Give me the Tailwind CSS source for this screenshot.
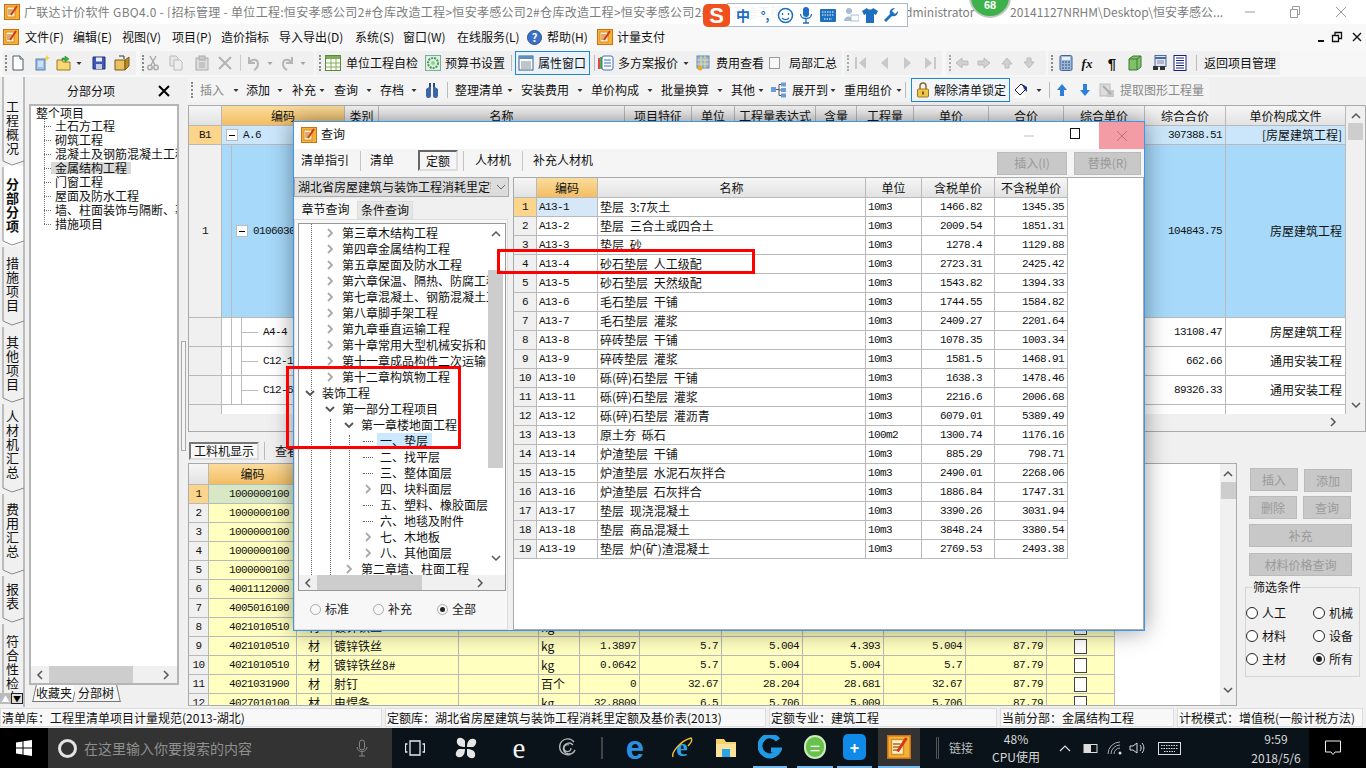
<!DOCTYPE html>
<html lang="zh-CN">
<head>
  <meta charset="UTF-8">
  <title>广联达计价软件 GBQ4.0</title>
  <script src="https://cdn.jsdelivr.net/npm/@tailwindcss/browser@4"></script>
</head>
<body class="w-[1366px] h-[768px] overflow-hidden relative bg-[#f0f0f0] text-[12px] leading-none text-[#111] font-['Noto_Sans_CJK_SC',sans-serif]">

  <!-- Icon sprite -->
  <svg class="hidden">
    <symbol id="app" viewBox="0 0 16 16"><rect x="0.5" y="0.5" width="15" height="15" fill="#f5b335" stroke="#c9701a"/><rect x="3" y="3" width="8" height="10" fill="#fff3c9" stroke="#d98a2a"/><path d="M4 6h5M4 8h5M4 10h4" stroke="#b8641c"/><path d="M13 2L7 11" stroke="#d3361c" stroke-width="2"/></symbol>
    <symbol id="doc" viewBox="0 0 16 16"><path d="M3 1h7l3 3v11H3z" fill="#fff" stroke="#4a5a6a"/><path d="M10 1v3h3" fill="#dfe8f0" stroke="#4a5a6a"/></symbol>
    <symbol id="multi" viewBox="0 0 16 16"><rect x="2" y="4" width="9" height="11" fill="#9cc0e6" stroke="#5b7fa8"/><path d="M4 7h5M4 9h5M4 11h5" stroke="#fff"/><path d="M13 0l1 2 2 1-2 1-1 2-1-2-2-1 2-1z" fill="#f7d23e"/></symbol>
    <symbol id="open" viewBox="0 0 16 16"><path d="M1 5h5l1 2h7v8H1z" fill="#f7d875" stroke="#9a7a1e"/><path d="M9 1l4 3-4 3V5H6V3h3z" fill="#3fae3a" stroke="#1f7a1c" stroke-width=".5"/></symbol>
    <symbol id="save" viewBox="0 0 16 16"><path d="M2 2h12v12H2z" fill="#3f57b5" stroke="#20307a"/><rect x="5" y="2.500" width="6" height="4" fill="#e8eefc"/><rect x="5" y="9" width="6" height="5" fill="#c5cfe8"/></symbol>
    <symbol id="folder" viewBox="0 0 16 16"><path d="M1 5h10v10H1z" fill="#e9c15f" stroke="#7b5a16"/><path d="M11 5l4-3v9l-4 4z" fill="#b98d2c" stroke="#7b5a16"/><path d="M5 1h5v3" fill="none" stroke="#333"/></symbol>
    <symbol id="cut" viewBox="0 0 16 16"><path d="M5 1l5 9M11 1L6 10" stroke="#aaa" stroke-width="1.500" fill="none"/><circle cx="5" cy="12.500" r="2.200" fill="none" stroke="#aaa" stroke-width="1.500"/><circle cx="11" cy="12.500" r="2.200" fill="none" stroke="#aaa" stroke-width="1.500"/></symbol>
    <symbol id="copy" viewBox="0 0 16 16"><path d="M2 1h6l2 2v8H2z" fill="#e6e6e6" stroke="#bbb"/><path d="M6 5h6l2 2v8H6z" fill="#eee" stroke="#bbb"/></symbol>
    <symbol id="paste" viewBox="0 0 16 16"><rect x="2" y="3" width="12" height="12" fill="#ddd" stroke="#aaa"/><rect x="5" y="1" width="6" height="4" fill="#ccc" stroke="#aaa"/><path d="M5 8h6M5 10h6M5 12h6" stroke="#aaa"/></symbol>
    <symbol id="x" viewBox="0 0 16 16"><path d="M2 2l12 12M14 2L2 14" stroke="#b5b5b5" stroke-width="2.200"/></symbol>
    <symbol id="undo" viewBox="0 0 16 16"><path d="M3 2v6h6" fill="none" stroke="#b5b5b5" stroke-width="2"/><path d="M3 8c3-5 9-4 9 1 0 3-2 5-4 6" fill="none" stroke="#b5b5b5" stroke-width="2"/></symbol>
    <symbol id="redo" viewBox="0 0 16 16"><path d="M13 2v6H7" fill="none" stroke="#b5b5b5" stroke-width="2"/><path d="M13 8c-3-5-9-4-9 1 0 3 2 5 4 6" fill="none" stroke="#b5b5b5" stroke-width="2"/></symbol>
    <symbol id="sheet" viewBox="0 0 16 16"><rect x="0.500" y="0.500" width="15" height="15" fill="#fff" stroke="#5a8a3a"/><path d="M1 1h14v3H1z" fill="#7fae52"/><path d="M1 8h14M1 12h14M6 4v11M11 4v11" stroke="#7fae52"/></symbol>
    <symbol id="gear" viewBox="0 0 16 16"><rect x="0.500" y="0.500" width="15" height="15" fill="#dff0e0" stroke="#7aa"/><circle cx="8" cy="8" r="5" fill="none" stroke="#4a9a58" stroke-width="2" stroke-dasharray="2 1"/><circle cx="8" cy="8" r="2" fill="#8ccf96"/></symbol>
    <symbol id="props" viewBox="0 0 16 16"><rect x="1" y="1" width="14" height="14" fill="#fff" stroke="#3f5f80"/><path d="M1 1h14v3H1z" fill="#5f8fc0"/><path d="M3 7h10M3 9h10M3 11h10M3 13h10" stroke="#7a8a9a"/></symbol>
    <symbol id="plan" viewBox="0 0 16 16"><rect x="0" y="3" width="4" height="11" fill="#e8483c"/><rect x="2" y="2" width="4" height="12" fill="#4caf50"/><rect x="4" y="1" width="11" height="14" rx="2" fill="#fff" stroke="#3a6fc0"/><path d="M6 5h7M6 8h7M6 11h7" stroke="#3a6fc0"/></symbol>
    <symbol id="cost" viewBox="0 0 16 16"><rect x="2" y="1" width="12" height="12" fill="#8fb8dc" stroke="#6088a8"/><path d="M2 5h12M2 9h12M6 1v12M10 1v12" stroke="#f4d68a"/><circle cx="5" cy="13" r="2.500" fill="#e2a93a"/></symbol>
    <symbol id="first" viewBox="0 0 16 16"><rect x="2" y="2" width="2" height="12" fill="#c8c8c8"/><path d="M13 2v12L6 8z" fill="#c8c8c8"/></symbol>
    <symbol id="prev" viewBox="0 0 16 16"><path d="M11 2v12L4 8z" fill="#c8c8c8"/></symbol>
    <symbol id="next" viewBox="0 0 16 16"><path d="M5 2v12l7-6z" fill="#c8c8c8"/></symbol>
    <symbol id="last" viewBox="0 0 16 16"><rect x="12" y="2" width="2" height="12" fill="#c8c8c8"/><path d="M3 2v12l7-6z" fill="#c8c8c8"/></symbol>
    <symbol id="al" viewBox="0 0 16 16"><path d="M8 3L2 8l6 5v-3h6V6H8z" fill="#d0d0d0" stroke="#bbb"/></symbol>
    <symbol id="ar" viewBox="0 0 16 16"><path d="M8 3l6 5-6 5v-3H2V6h6z" fill="#d0d0d0" stroke="#bbb"/></symbol>
    <symbol id="au" viewBox="0 0 16 16"><path d="M8 3l5 6h-3v4H6V9H3z" fill="#d0d0d0" stroke="#bbb"/></symbol>
    <symbol id="ad" viewBox="0 0 16 16"><path d="M8 13l5-6h-3V3H6v4H3z" fill="#d0d0d0" stroke="#bbb"/></symbol>
    <symbol id="calc" viewBox="0 0 16 16"><rect x="2" y="0.500" width="12" height="15" rx="1.500" fill="#9db8de" stroke="#46638f"/><rect x="4" y="2" width="8" height="3" fill="#e8f0fa"/><path d="M4 7h2M7 7h2M10 7h2M4 10h2M7 10h2M10 10h2M4 13h2M7 13h2M10 13h2" stroke="#334a70"/></symbol>
    <symbol id="cube" viewBox="0 0 16 16"><path d="M2 4l4-3h8v11l-4 3H2z" fill="#7fc06a" stroke="#3c7a30"/><path d="M2 4h8v11M10 4l4-3" fill="none" stroke="#3c7a30"/></symbol>
    <symbol id="net" viewBox="0 0 16 16"><rect x="3" y="0.500" width="11" height="11" fill="#dde6f5" stroke="#4a6aa0"/><path d="M3 3h11" stroke="#4a6aa0" stroke-width="2"/><path d="M5 6h7M5 8h7" stroke="#889"/><rect x="1" y="11" width="5" height="4" fill="#333"/><rect x="8" y="11" width="5" height="4" fill="#333"/></symbol>
    <symbol id="list" viewBox="0 0 16 16"><rect x="2" y="0.500" width="12" height="15" fill="#fff" stroke="#14217a"/><path d="M4 3h8M4 5.500h8M4 8h8M4 10.500h8M4 13h8" stroke="#14217a"/></symbol>
    <symbol id="bino" viewBox="0 0 16 16"><path d="M5 1h2v5H5zM9 1h2v5H9z" fill="#2c4a7a"/><path d="M2 7l3-2h2v8a2 2 0 0 1-5 1zM14 7l-3-2H9v8a2 2 0 0 0 5 1z" fill="#3d66a8"/></symbol>
    <symbol id="tree" viewBox="0 0 16 16"><rect x="0" y="5" width="5" height="5" fill="#6a9ed8"/><rect x="10" y="0.500" width="5" height="4" fill="#6a9ed8"/><rect x="10" y="6" width="5" height="4" fill="#6a9ed8"/><rect x="10" y="11.500" width="5" height="4" fill="#6a9ed8"/><path d="M5 7.500h3M8 2.500v11M8 2.500h2M8 8h2M8 13.500h2" stroke="#555" fill="none"/></symbol>
    <symbol id="lock" viewBox="0 0 16 16"><path d="M5 7V4a3 3 0 0 1 6 0v3" fill="none" stroke="#8a6a2a" stroke-width="1.500"/><rect x="2.500" y="7" width="11" height="8" rx="1" fill="#f0c64a" stroke="#a07a1a"/><rect x="7" y="9.500" width="2" height="3" fill="#7a5a10"/></symbol>
    <symbol id="bucket" viewBox="0 0 16 16"><path d="M2 8l6-6 5 5-6 6z" fill="#fff" stroke="#222"/><path d="M9 2l5 3v5l-3-3z" fill="#1f3a8a"/><rect x="1" y="13" width="11" height="3" fill="#fff"/></symbol>
    <symbol id="up" viewBox="0 0 12 16"><path d="M6 2l5 6H8v6H4V8H1z" fill="#2f7fd8"/></symbol>
    <symbol id="down" viewBox="0 0 12 16"><path d="M6 14l5-6H8V2H4v6H1z" fill="#2f7fd8"/></symbol>
    <symbol id="extract" viewBox="0 0 16 16"><rect x="1" y="2" width="10" height="12" fill="#ddd" stroke="#bbb"/><path d="M8 8h7v7H8z" fill="#c8c8c8"/><path d="M4 4l8 8" stroke="#aaa" stroke-width="2"/></symbol>
    <symbol id="caret" viewBox="0 0 6 6"><path d="M0.500 2h5L3 5z" fill="#333"/></symbol>
  </svg>

  <!-- Title bar -->
  <div class="h-[24px] bg-white flex items-center text-[#7d7d7d] whitespace-nowrap">
    <svg class="w-[16px] h-[16px] ml-[4px] shrink-0"><use href="#app"></use></svg>
    <div class="w-[881px] ml-[4px] overflow-hidden shrink-0 tracking-[0.3px]">广联达计价软件 GBQ4.0 - [招标管理 - 单位工程:恒安孝感公司2#仓库改造工程&gt;恒安孝感公司2#仓库改造工程&gt;恒安孝感公司2#仓库改造工程</div>
    <div class="w-[105px] shrink-0">dministrator</div>
    <div class="w-[225px] shrink-0">20141127NRHM\Desktop\恒安孝感公...</div>
    <svg class="w-[12px] h-[12px] shrink-0 ml-[9px]" viewBox="0 0 12 12"><path d="M1 6h10" stroke="#999"/></svg>
    <svg class="w-[12px] h-[12px] shrink-0 ml-[33px]" viewBox="0 0 12 12"><path d="M1.500 3.500h7v8h-7zM3.500 3V0.500h7v8H9" fill="none" stroke="#999"/></svg>
    <svg class="w-[12px] h-[12px] shrink-0 ml-[34px]" viewBox="0 0 12 12"><path d="M1 1l10 10M11 1L1 11" stroke="#999"/></svg>
  </div>

  <!-- Menu bar -->
  <div class="h-[26px] bg-[#f8f8f8] flex items-center whitespace-nowrap">
    <svg class="w-[16px] h-[16px] ml-[3px] shrink-0"><use href="#app"></use></svg>
    <div class="ml-[6px] w-[48px] shrink-0">文件(F)</div>
    <div class="w-[49px] shrink-0">编辑(E)</div>
    <div class="w-[50px] shrink-0">视图(V)</div>
    <div class="w-[49px] shrink-0">项目(P)</div>
    <div class="w-[58px] shrink-0">造价指标</div>
    <div class="w-[76px] shrink-0">导入导出(D)</div>
    <div class="w-[48px] shrink-0">系统(S)</div>
    <div class="w-[54px] shrink-0">窗口(W)</div>
    <div class="w-[70px] shrink-0">在线服务(L)</div>
    <div class="w-[15px] h-[15px] rounded-full bg-[#3b72c9] border border-[#2a4f90] text-white font-bold text-[11px] flex items-center justify-center shrink-0">?</div>
    <div class="ml-[5px] w-[47px] shrink-0">帮助(H)</div>
    <svg class="w-[16px] h-[16px] ml-[3px] shrink-0"><use href="#app"></use></svg>
    <div class="ml-[4px] w-[48px] shrink-0">计量支付</div>
    <svg class="w-[8px] h-[12px] ml-[652px] shrink-0" viewBox="0 0 8 12"><path d="M1 10h6" stroke="#111" stroke-width="2"/></svg>
    <svg class="w-[12px] h-[12px] ml-[6px] shrink-0" viewBox="0 0 12 12"><path d="M1.500 4.500h6v6h-6zM4 4V1.500h6.500v6H8" fill="none" stroke="#111" stroke-width="1.300"/></svg>
    <svg class="w-[10px] h-[10px] ml-[9px] shrink-0" viewBox="0 0 10 10"><path d="M1 1l8 8M9 1L1 9" stroke="#111" stroke-width="1.400"/></svg>
  </div>

  <!-- Toolbar 1 -->
  <div class="h-[27px] bg-[#f7f7f7] pt-[1px] whitespace-nowrap flex">
    <div class="ml-[3px] w-[133px] h-[24px] flex items-center shrink-0 bg-[#f0f0f0] rounded-[2px]">
      <div class="ml-[2px] w-[3px] h-[16px] border-l-2 border-dotted border-[#888]"></div>
      <svg class="w-[16px] h-[16px] ml-[2px]"><use href="#doc"></use></svg>
      <svg class="w-[16px] h-[16px] ml-[8px]"><use href="#multi"></use></svg>
      <svg class="w-[16px] h-[16px] ml-[6px]"><use href="#open"></use></svg>
      <svg class="w-[6px] h-[6px] ml-[4px]"><use href="#caret"></use></svg>
      <svg class="w-[16px] h-[16px] ml-[9px]"><use href="#save"></use></svg>
      <svg class="w-[16px] h-[16px] ml-[7px]"><use href="#folder"></use></svg>
    </div>
    <div class="ml-[4px] w-[174px] h-[24px] flex items-center shrink-0 bg-[#f0f0f0] rounded-[2px]">
      <div class="ml-[2px] w-[3px] h-[16px] border-l-2 border-dotted border-[#888]"></div>
      <svg class="w-[16px] h-[16px]"><use href="#cut"></use></svg>
      <svg class="w-[16px] h-[16px] ml-[7px]"><use href="#copy"></use></svg>
      <svg class="w-[16px] h-[16px] ml-[10px]"><use href="#paste"></use></svg>
      <svg class="w-[16px] h-[16px] ml-[7px]"><use href="#x"></use></svg>
      <div class="ml-[7px] w-[1px] h-[16px] bg-[#ccc]"></div>
      <svg class="w-[16px] h-[16px] ml-[5px]"><use href="#undo"></use></svg>
      <svg class="w-[6px] h-[6px] ml-[5px] opacity-40"><use href="#caret"></use></svg>
      <svg class="w-[16px] h-[16px] ml-[6px]"><use href="#redo"></use></svg>
      <svg class="w-[6px] h-[6px] ml-[5px] opacity-40"><use href="#caret"></use></svg>
    </div>
    <div class="ml-[2px] w-[526px] h-[24px] flex items-center shrink-0 bg-[#f0f0f0] rounded-[2px]">
      <div class="ml-[3px] w-[3px] h-[16px] border-l-2 border-dotted border-[#888]"></div>
      <svg class="w-[16px] h-[16px] ml-[3px]"><use href="#sheet"></use></svg>
      <div class="ml-[5px] w-[72px]">单位工程自检</div>
      <svg class="w-[16px] h-[16px] ml-[7px]"><use href="#gear"></use></svg>
      <div class="ml-[4px] w-[60px]">预算书设置</div>
      <div class="ml-[6px] w-[1px] h-[16px] bg-[#bbb]"></div>
      <div class="ml-[3px] w-[75px] h-[24px] border border-[#1f86d6] bg-[#e9f2fb] flex items-center">
        <svg class="w-[16px] h-[16px] ml-[2px]"><use href="#props"></use></svg>
        <div class="ml-[4px]">属性窗口</div>
      </div>
      <div class="ml-[4px] w-[1px] h-[16px] bg-[#bbb]"></div>
      <svg class="w-[16px] h-[16px] ml-[3px]"><use href="#plan"></use></svg>
      <div class="ml-[4px] w-[60px]">多方案报价</div>
      <svg class="w-[6px] h-[6px] ml-[5px]"><use href="#caret"></use></svg>
      <svg class="w-[16px] h-[16px] ml-[6px]"><use href="#cost"></use></svg>
      <div class="ml-[5px] w-[48px]">费用查看</div>
      <div class="ml-[5px] w-[11px] h-[12px] border border-[#999] bg-[#f8f8f8]"></div>
      <div class="ml-[9px] w-[48px]">局部汇总</div>
    </div>
    <div class="ml-[2px] w-[98px] h-[24px] flex items-center shrink-0 bg-[#f0f0f0] rounded-[2px]">
      <div class="ml-[3px] w-[3px] h-[16px] border-l-2 border-dotted border-[#aaa]"></div>
      <svg class="w-[16px] h-[16px] ml-[3px]"><use href="#first"></use></svg>
      <svg class="w-[16px] h-[16px] ml-[8px]"><use href="#prev"></use></svg>
      <svg class="w-[16px] h-[16px] ml-[6px]"><use href="#next"></use></svg>
      <svg class="w-[16px] h-[16px] ml-[7px]"><use href="#last"></use></svg>
    </div>
    <div class="ml-[4px] w-[100px] h-[24px] flex items-center shrink-0 bg-[#f0f0f0] rounded-[2px]">
      <div class="ml-[3px] w-[3px] h-[16px] border-l-2 border-dotted border-[#aaa]"></div>
      <svg class="w-[16px] h-[16px] ml-[2px]"><use href="#al"></use></svg>
      <svg class="w-[16px] h-[16px] ml-[6px]"><use href="#ar"></use></svg>
      <svg class="w-[16px] h-[16px] ml-[7px]"><use href="#au"></use></svg>
      <svg class="w-[16px] h-[16px] ml-[6px]"><use href="#ad"></use></svg>
    </div>
    <div class="ml-[2px] w-[232px] h-[24px] flex items-center shrink-0 bg-[#f0f0f0] rounded-[2px]">
      <div class="ml-[3px] w-[3px] h-[16px] border-l-2 border-dotted border-[#888]"></div>
      <svg class="w-[16px] h-[16px] ml-[4px]"><use href="#calc"></use></svg>
      <div class="ml-[5px] w-[16px] text-center font-['Liberation_Serif',serif] italic font-bold text-[13px]">fx</div>
      <div class="ml-[9px] w-[16px] text-center font-['Liberation_Sans',sans-serif] font-bold text-[15px]">¶</div>
      <svg class="w-[16px] h-[16px] ml-[7px]"><use href="#cube"></use></svg>
      <svg class="w-[16px] h-[16px] ml-[9px]"><use href="#net"></use></svg>
      <svg class="w-[16px] h-[16px] ml-[4px]"><use href="#list"></use></svg>
      <div class="ml-[8px] w-[1px] h-[16px] bg-[#bbb]"></div>
      <div class="ml-[7px] w-[72px]">返回项目管理</div>
    </div>
  </div>

  <!-- Main area -->
  <div class="h-[630px] flex">

    <!-- Vertical tabs -->
    <div class="relative w-[25px] shrink-0 flex flex-col overflow-hidden">
      <svg class="absolute inset-0 w-[25px] h-[630px]" viewBox="0 0 25 630">
        <path d="M3 0V86l9 4 12-4V0" fill="#f4f4f4"/>
        <path d="M3 90l9-4 12 4V166l-12 4-9-4z" fill="#fff"/>
        <path d="M3 0V84l9 4M3 90V164l9 4M3 170V244l9 4M3 250V321l9 4M3 327V411l9 4M3 417V493l9 4M3 499V541l9 4M3 547V618M24 0V630" fill="none" stroke="#8a8a8a"/>
        <path d="M12 88l12-4M12 168l12-4M12 248l12-4M12 325l12-4M12 415l12-4M12 497l12-4M12 545l12-4" fill="none" stroke="#8a8a8a"/>
      </svg>
      <div class="relative h-[86px] pt-[23px] shrink-0 flex justify-center"><span class="text-[13px] tracking-[1px] whitespace-nowrap [writing-mode:vertical-rl]">工程概况</span></div>
      <div class="relative h-[80px] pt-[15px] shrink-0 flex justify-center"><span class="text-[13px] tracking-[1px] whitespace-nowrap font-bold [writing-mode:vertical-rl]">分部分项</span></div>
      <div class="relative h-[80px] pt-[14px] shrink-0 flex justify-center"><span class="text-[13px] tracking-[1px] whitespace-nowrap [writing-mode:vertical-rl]">措施项目</span></div>
      <div class="relative h-[77px] pt-[13px] shrink-0 flex justify-center"><span class="text-[13px] tracking-[1px] whitespace-nowrap [writing-mode:vertical-rl]">其他项目</span></div>
      <div class="relative h-[90px] pt-[10px] shrink-0 flex justify-center"><span class="text-[13px] tracking-[1px] whitespace-nowrap [writing-mode:vertical-rl]">人材机汇总</span></div>
      <div class="relative h-[82px] pt-[13px] shrink-0 flex justify-center"><span class="text-[13px] tracking-[1px] whitespace-nowrap [writing-mode:vertical-rl]">费用汇总</span></div>
      <div class="relative h-[48px] pt-[11px] shrink-0 flex justify-center"><span class="text-[13px] tracking-[1px] whitespace-nowrap [writing-mode:vertical-rl]">报表</span></div>
      <div class="relative h-[75px] pt-[15px] shrink-0 flex justify-center overflow-hidden"><span class="text-[13px] tracking-[1px] whitespace-nowrap [writing-mode:vertical-rl]">符合性检查</span></div>
      <div class="absolute left-0 top-[616px] flex">
        <div class="w-[11px] h-[11px] bg-[#bbb] text-white text-[8px] flex items-center justify-center">▲</div>
        <div class="w-[12px] h-[11px] bg-[#ddd] border border-[#222] text-black text-[8px] flex items-center justify-center">▼</div>
      </div>
    </div>

    <!-- Division tree panel -->
    <div class="w-[156px] shrink-0 flex flex-col">
      <div class="h-[27px] shrink-0 flex items-center relative">
        <div class="w-full text-center pr-[24px] text-[12px]">分部分项</div>
        <svg class="absolute left-[133px] top-[8px] w-[12px] h-[12px]" viewBox="0 0 12 12"><path d="M1 1l10 10M11 1L1 11" stroke="#000" stroke-width="2"/></svg>
      </div>
      <div class="relative ml-[4px] w-[150px] h-[581px] bg-white border-2 border-[#b5b5b5] overflow-hidden shrink-0">
        <div id="leftTree"></div>
        <div class="absolute left-[13px] top-[13px] h-[105px] border-l border-dotted border-[#777]"></div>
        <div class="absolute left-0 right-0 bottom-0 h-[17px] bg-[#f0f0f0] flex items-center">
          <svg class="w-[18px] h-[10px]" viewBox="0 0 18 10"><path d="M11 1L7 5l4 4" fill="none" stroke="#555" stroke-width="1.500"/></svg>
          <div class="w-[84px] h-[17px] bg-[#cdcdcd]"></div>
          <svg class="w-[18px] h-[10px] ml-[24px]" viewBox="0 0 18 10"><path d="M7 1l4 4-4 4" fill="none" stroke="#555" stroke-width="1.500"/></svg>
        </div>
      </div>
      <div class="ml-[9px] flex h-[17px] text-[12px]">
        <div class="w-[41px] border-x border-b border-[#777] bg-white skew-x-[-12deg] flex items-center justify-center"><span class="skew-x-[12deg]">收藏夹</span></div>
        <div class="w-[44px] border-r border-b border-[#777] bg-[#f4f4f4] skew-x-[12deg] flex items-center justify-center"><span class="skew-x-[-12deg]">分部树</span></div>
      </div>
    </div>

    <!-- Splitter -->
    <div class="w-[7px] shrink-0 relative">
      <div class="absolute left-0 top-[264px] w-[5px] h-[110px] border border-[#aaa] bg-[#f4f4f4]"></div>
    </div>

    <!-- Right column -->
    <div class="flex-1 flex flex-col min-w-0">

      <!-- Toolbar 2 -->
      <div class="h-[27px] pt-[1px] shrink-0">
        <div class="w-[1021px] h-[24px] flex items-center whitespace-nowrap bg-[#f4f4f4] rounded-[2px]">
          <div class="ml-[3px] w-[3px] h-[16px] border-l-2 border-dotted border-[#888] shrink-0"></div>
          <div class="ml-[6px] w-[24px] shrink-0 text-[#888]">插入</div>
          <svg class="w-[6px] h-[6px] ml-[9px] shrink-0"><use href="#caret"></use></svg>
          <div class="ml-[7px] w-[24px] shrink-0">添加</div>
          <svg class="w-[6px] h-[6px] ml-[7px] shrink-0"><use href="#caret"></use></svg>
          <div class="ml-[9px] w-[24px] shrink-0">补充</div>
          <svg class="w-[6px] h-[6px] ml-[3px] shrink-0"><use href="#caret"></use></svg>
          <div class="ml-[9px] w-[24px] shrink-0">查询</div>
          <svg class="w-[6px] h-[6px] ml-[8px] shrink-0"><use href="#caret"></use></svg>
          <div class="ml-[8px] w-[24px] shrink-0">存档</div>
          <svg class="w-[6px] h-[6px] ml-[7px] shrink-0"><use href="#caret"></use></svg>
          <svg class="w-[16px] h-[16px] ml-[7px] shrink-0"><use href="#bino"></use></svg>
          <div class="ml-[7px] w-[1px] h-[16px] bg-[#bbb] shrink-0"></div>
          <div class="ml-[7px] w-[48px] shrink-0">整理清单</div>
          <svg class="w-[6px] h-[6px] ml-[4px] shrink-0"><use href="#caret"></use></svg>
          <div class="ml-[8px] w-[48px] shrink-0">安装费用</div>
          <svg class="w-[6px] h-[6px] ml-[8px] shrink-0"><use href="#caret"></use></svg>
          <div class="ml-[8px] w-[48px] shrink-0">单价构成</div>
          <svg class="w-[6px] h-[6px] ml-[8px] shrink-0"><use href="#caret"></use></svg>
          <div class="ml-[8px] w-[48px] shrink-0">批量换算</div>
          <svg class="w-[6px] h-[6px] ml-[8px] shrink-0"><use href="#caret"></use></svg>
          <div class="ml-[8px] w-[24px] shrink-0">其他</div>
          <svg class="w-[6px] h-[6px] ml-[3px] shrink-0"><use href="#caret"></use></svg>
          <svg class="w-[16px] h-[16px] ml-[7px] shrink-0"><use href="#tree"></use></svg>
          <div class="ml-[5px] w-[36px] shrink-0">展开到</div>
          <svg class="w-[6px] h-[6px] ml-[2px] shrink-0"><use href="#caret"></use></svg>
          <div class="ml-[8px] w-[48px] shrink-0">重用组价</div>
          <svg class="w-[6px] h-[6px] ml-[4px] shrink-0"><use href="#caret"></use></svg>
          <div class="ml-[3px] w-[1px] h-[16px] bg-[#bbb] shrink-0"></div>
          <div class="ml-[5px] w-[99px] h-[24px] border border-[#1f86d6] bg-[#f2f6fb] flex items-center shrink-0">
            <svg class="w-[16px] h-[16px] ml-[3px]"><use href="#lock"></use></svg>
            <div class="ml-[3px]">解除清单锁定</div>
          </div>
          <svg class="w-[16px] h-[16px] ml-[3px] shrink-0"><use href="#bucket"></use></svg>
          <svg class="w-[6px] h-[6px] ml-[7px] shrink-0"><use href="#caret"></use></svg>
          <div class="ml-[7px] w-[1px] h-[16px] bg-[#bbb] shrink-0"></div>
          <svg class="w-[12px] h-[16px] ml-[6px] shrink-0"><use href="#up"></use></svg>
          <svg class="w-[12px] h-[16px] ml-[11px] shrink-0"><use href="#down"></use></svg>
          <svg class="w-[16px] h-[16px] ml-[8px] shrink-0"><use href="#extract"></use></svg>
          <div class="ml-[5px] w-[84px] shrink-0 text-[#888]">提取图形工程量</div>
        </div>
      </div>

      <!-- Upper grid -->
      <div class="h-[327px] mt-[1px] border border-[#aaa] bg-white flex shrink-0 relative">
        <div class="w-[1157px] shrink-0">
          <div id="upperGrid" class="h-[308px] overflow-hidden"></div>
          <div class="h-[17px] bg-[#f0f0f0] relative">
            <svg class="absolute right-[8px] top-[3px] w-[10px] h-[10px]" viewBox="0 0 10 10"><path d="M3 1l4 4-4 4" fill="none" stroke="#555" stroke-width="1.500"/></svg>
          </div>
        </div>
        <div class="flex-1 bg-[#f0f0f0] flex flex-col items-center">
          <svg class="w-[10px] h-[10px] mt-[5px]" viewBox="0 0 10 10"><path d="M1 7l4-4 4 4" fill="none" stroke="#555" stroke-width="1.500"/></svg>
          <div class="w-[15px] h-[17px] bg-[#cdcdcd] mt-[2px]"></div>
          <svg class="w-[10px] h-[10px] mt-[260px]" viewBox="0 0 10 10"><path d="M1 3l4 4 4-4" fill="none" stroke="#555" stroke-width="1.500"/></svg>
        </div>
      </div>

      <!-- Lower tabs -->
      <div class="h-[31px] pt-[10px] flex items-start shrink-0">
        <div class="ml-[1px] w-[70px] h-[18px] border-2 border-l-[#777] border-t-[#777] border-r-[#ddd] border-b-[#ddd] flex items-center justify-center text-[12px] bg-[#f8f8f8]">工料机显示</div>
        <div class="ml-[5px] w-[1px] h-[18px] bg-[#bbb]"></div>
        <div class="ml-[10px] mt-[3px]">查看</div>
      </div>

      <!-- Lower grid and side buttons -->
      <div class="h-[243px] flex shrink-0">
        <div class="w-[1049px] shrink-0 border border-[#aaa] bg-white flex">
          <div id="lowerGrid" class="w-[1031px] shrink-0 overflow-hidden"></div>
          <div class="flex-1 bg-[#f0f0f0] flex flex-col items-center">
            <svg class="w-[10px] h-[10px] mt-[5px]" viewBox="0 0 10 10"><path d="M1 7l4-4 4 4" fill="none" stroke="#555" stroke-width="1.500"/></svg>
            <div class="w-[15px] h-[17px] bg-[#cdcdcd] mt-[3px]"></div>
            <svg class="w-[10px] h-[10px] mt-[186px]" viewBox="0 0 10 10"><path d="M1 3l4 4 4-4" fill="none" stroke="#555" stroke-width="1.500"/></svg>
          </div>
        </div>
        <div class="flex-1 text-[#9a9a9a]">
          <div class="flex mt-[5px] ml-[13px]">
            <div class="w-[48px] h-[23px] bg-[#c8c8c8] border border-[#bbb] flex items-center justify-center">插入</div>
            <div class="w-[48px] h-[23px] ml-[6px] mt-[1px] bg-[#c8c8c8] border border-[#bbb] flex items-center justify-center">添加</div>
          </div>
          <div class="flex mt-[4px] ml-[12px]">
            <div class="w-[48px] h-[23px] bg-[#c8c8c8] border border-[#bbb] flex items-center justify-center">删除</div>
            <div class="w-[48px] h-[23px] ml-[6px] bg-[#c8c8c8] border border-[#bbb] flex items-center justify-center">查询</div>
          </div>
          <div class="w-[103px] h-[23px] mt-[5px] ml-[12px] bg-[#c8c8c8] border border-[#bbb] flex items-center justify-center">补充</div>
          <div class="w-[103px] h-[23px] mt-[6px] ml-[12px] bg-[#c8c8c8] border border-[#bbb] flex items-center justify-center">材料价格查询</div>
          <!-- Filter group -->
          <div class="relative ml-[8px] mt-[11px] w-[115px] h-[90px] border border-[#d5d5d5] text-[#111]">
            <div class="absolute left-[6px] top-[-7px] px-[1px] bg-[#f0f0f0]">筛选条件</div>
            <div class="grid grid-cols-[67px_48px] gap-y-[9px] pt-[18px]">
              <div class="flex items-center h-[14px]"><div class="w-[12px] h-[12px] rounded-full border border-[#222] bg-white"></div><span class="ml-[4px]">人工</span></div>
              <div class="flex items-center h-[14px]"><div class="w-[12px] h-[12px] rounded-full border border-[#222] bg-white"></div><span class="ml-[4px]">机械</span></div>
              <div class="flex items-center h-[14px]"><div class="w-[12px] h-[12px] rounded-full border border-[#222] bg-white"></div><span class="ml-[4px]">材料</span></div>
              <div class="flex items-center h-[14px]"><div class="w-[12px] h-[12px] rounded-full border border-[#222] bg-white"></div><span class="ml-[4px]">设备</span></div>
              <div class="flex items-center h-[14px]"><div class="w-[12px] h-[12px] rounded-full border border-[#222] bg-white"></div><span class="ml-[4px]">主材</span></div>
              <div class="flex items-center h-[14px]"><div class="w-[12px] h-[12px] rounded-full border border-[#222] bg-white flex items-center justify-center"><div class="w-[6px] h-[6px] rounded-full bg-[#222]"></div></div><span class="ml-[4px]">所有</span></div>
            </div>
          </div>
        </div>
      </div>
    </div>
  </div>

  <!-- Status bar -->
  <div class="h-[21px] flex items-center whitespace-nowrap gap-[3px] bg-[#f0f0f0]">
    <div class="w-[382px] h-[19px] bg-[#f8f8f8] border border-[#ddd] flex items-center pl-[1px] shrink-0">清单库：工程里清单项目计量规范(2013-湖北)</div>
    <div class="w-[381px] h-[19px] bg-[#f8f8f8] border border-[#ddd] flex items-center pl-[1px] shrink-0 overflow-hidden">定额库：湖北省房屋建筑与装饰工程消耗里定额及基价表(2013)</div>
    <div class="w-[228px] h-[19px] bg-[#f8f8f8] border border-[#ddd] flex items-center pl-[1px] shrink-0">定额专业：建筑工程</div>
    <div class="w-[174px] h-[19px] bg-[#f8f8f8] border border-[#ddd] flex items-center pl-[1px] shrink-0">当前分部：金属结构工程</div>
    <div class="w-[186px] h-[19px] bg-[#f8f8f8] border border-[#ddd] flex items-center pl-[1px] shrink-0">计税模式：增值税(一般计税方法)</div>
  </div>

  <!-- Taskbar -->
  <div class="h-[40px] bg-[#0a1319] flex items-center whitespace-nowrap text-[#d8d8d8]">
    <div class="w-[48px] h-[40px] bg-black flex items-center justify-center shrink-0">
      <svg class="w-[16px] h-[16px]" viewBox="0 0 16 16"><path d="M0 2.500l6.500-1V7.500H0zM7.500 1.300L16 0v7.500H7.500zM0 8.500h6.500v6L0 13.500zM7.500 8.500H16V16l-8.500-1.300z" fill="#fff"/></svg>
    </div>
    <div class="w-[344px] h-[40px] bg-[#333] flex items-center shrink-0">
      <div class="ml-[10px] w-[19px] h-[19px] rounded-full border-[3px] border-[#e4e4e4]"></div>
      <div class="ml-[7px] w-[250px] text-[14px] text-[#8f8f8f]">在这里输入你要搜索的内容</div>
      <svg class="w-[12px] h-[18px] ml-[22px]" viewBox="0 0 12 18"><rect x="3.500" y="1" width="5" height="10" rx="2.500" fill="none" stroke="#888"/><path d="M1 8c0 6 10 6 10 0M6 13v4M3 17h6" fill="none" stroke="#888"/></svg>
    </div>
    <svg class="w-[20px] h-[16px] ml-[13px] shrink-0" viewBox="0 0 20 16"><path d="M5 1h10v14H5zM2.500 4H0.500v8h2M17.500 4h2v8h-2" fill="none" stroke="#e8e8e8" stroke-width="1.300"/></svg>
    <svg class="w-[22px] h-[22px] ml-[30px] shrink-0" viewBox="0 0 22 22"><circle cx="11" cy="11" r="2" fill="#0a1319"/><path d="M10 10C4 10 1 7 2 3s7-2 8 1zM12 10c0-6 3-9 7-8s2 7-1 8zM12 12c6 0 9 3 8 7s-7 2-8-1zM10 12c0 6-3 9-7 8s-2-7 1-8z" fill="#e6e6e6"/></svg>
    <div class="ml-[30px] w-[24px] text-center text-[#f2f2f2] text-[29px] leading-[30px] font-['Liberation_Serif',serif] shrink-0">e</div>
    <svg class="w-[20px] h-[20px] ml-[26px] shrink-0" viewBox="0 0 20 20"><path d="M17 4A8 8 0 1 0 18 12c-1 3-4 4-6 4a5.500 5.500 0 1 1 4-9M14 10a3.500 3.500 0 1 1-2-3" fill="none" stroke="#b5b5b5" stroke-width="1.300"/></svg>
    <div class="ml-[24px] w-[2px] h-[22px] border-x border-[#444] shrink-0"></div>
    <div class="ml-[20px] w-[24px] text-center text-[#2c8fe0] text-[33px] leading-[30px] font-bold font-['Liberation_Sans',sans-serif] shrink-0">e</div>
    <svg class="w-[24px] h-[24px] ml-[23px] shrink-0" viewBox="0 0 24 24"><text x="12" y="20" text-anchor="middle" font-family="Liberation Serif" font-size="26" font-weight="700" fill="#2aa3e8">e</text><path d="M3 21C1 17 10 5 21 2c2 2-1 6-3 8" fill="none" stroke="#f3bd2f" stroke-width="1.500"/></svg>
    <svg class="w-[22px] h-[20px] ml-[21px] shrink-0" viewBox="0 0 22 20"><path d="M1 1h8l2 3h10v15H1z" fill="#f6d36a"/><path d="M1 6h20v13H1z" fill="#f9e29a"/><path d="M7 11h8v8H7z" fill="#2aa3e8"/></svg>
    <div class="ml-[16px] w-[34px] h-[40px] border-b-2 border-[#76b9ed] flex items-center justify-center shrink-0">
      <svg class="w-[24px] h-[24px]" viewBox="0 0 24 24"><path d="M20 5A10 10 0 1 0 21 15H13" fill="none" stroke="#1f9be6" stroke-width="5"/></svg>
    </div>
    <div class="ml-[10px] w-[36px] h-[40px] border-b-2 border-[#76b9ed] flex items-center justify-center shrink-0">
      <div class="w-[22px] h-[24px] rounded-full border-2 border-[#cfe8c0] bg-[#66c24a] text-white text-[18px] flex items-center justify-center">=</div>
    </div>
    <div class="ml-[4px] w-[35px] h-[40px] border-b-2 border-[#76b9ed] flex items-center justify-center shrink-0">
      <div class="w-[23px] h-[26px] rounded-[5px] bg-[#0f8ae8] text-white text-[16px] font-bold flex items-center justify-center">+</div>
    </div>
    <div class="ml-[6px] w-[42px] h-[40px] bg-[#333] border-b-2 border-[#76b9ed] flex items-center justify-center shrink-0">
      <svg class="w-[24px] h-[24px]"><use href="#app"></use></svg>
    </div>
    <div class="ml-[16px] w-[3px] h-[22px] border-x border-[#555] shrink-0"></div>
    <div class="ml-[10px] w-[28px] text-[12px] text-[#bbb] shrink-0">链接</div>
    <div class="ml-[13px] w-[52px] flex flex-col items-center gap-[6px] shrink-0"><span class="text-[12px]">48%</span><span class="text-[12px]">CPU使用</span></div>
    <svg class="w-[12px] h-[8px] ml-[17px] shrink-0" viewBox="0 0 12 8"><path d="M1 7l5-5 5 5" fill="none" stroke="#ddd" stroke-width="1.200"/></svg>
    <svg class="w-[16px] h-[10px] ml-[11px] shrink-0" viewBox="0 0 16 10"><rect x="2" y="1.500" width="13" height="8" fill="none" stroke="#ddd"/><rect x="2" y="2" width="7" height="7" fill="#ddd"/></svg>
    <svg class="w-[15px] h-[14px] ml-[9px] shrink-0" viewBox="0 0 15 14"><path d="M1 13a12 12 0 0 1 12-12M4 13a9 9 0 0 1 9-9M7 13a6 6 0 0 1 6-6" fill="none" stroke="#aaa"/><circle cx="13" cy="12" r="1.500" fill="#ddd"/></svg>
    <svg class="w-[16px] h-[14px] ml-[7px] shrink-0" viewBox="0 0 16 14"><path d="M1 5h3l4-3v10L4 9H1zM11 4c1.500 2 1.500 4 0 6M13 2c2.500 3 2.500 7 0 10" fill="none" stroke="#ddd"/></svg>
    <svg class="w-[23px] h-[13px] ml-[13px] shrink-0" viewBox="0 0 23 13"><rect x="0.500" y="0.500" width="22" height="12" fill="none" stroke="#ddd"/><path d="M3 3.500h17M3 6.500h17M6 9.500h11" stroke="#ddd" stroke-dasharray="1.500 1"/></svg>
    <div class="ml-[62px] w-[66px] flex flex-col items-center gap-[7px] shrink-0 text-[12px]"><span>9:59</span><span>2018/5/6</span></div>
    <div class="w-[57px] h-[40px] bg-black flex items-center shrink-0">
      <svg class="w-[16px] h-[16px] ml-[16px]" viewBox="0 0 16 16"><path d="M0.500 1h15v11H10l-2 2.500L6 12H0.500z" fill="none" stroke="#eee"/></svg>
    </div>
  </div>

  <!-- Sogou input bar, on top of the title bar -->
  <div class="absolute left-[727px] top-[3px] w-[181px] h-[24px] bg-white/90 border border-[#a9bdd0] flex items-center text-[#1d6fc0]">
    <div class="ml-[7px] w-[16px] text-[14px] font-bold text-center shrink-0">中</div>
    <div class="ml-[7px] w-[14px] text-[12px] font-bold text-center shrink-0">°,</div>
    <svg class="ml-[5px] w-[17px] h-[17px] shrink-0" viewBox="0 0 17 17"><circle cx="8.500" cy="8.500" r="7" fill="none" stroke="#1d6fc0" stroke-width="1.500"/><path d="M5.500 6v2M11.500 6v2M5 11c2 2 5 2 7 0" fill="none" stroke="#1d6fc0" stroke-width="1.300"/></svg>
    <svg class="ml-[5px] w-[14px] h-[18px] shrink-0" viewBox="0 0 14 18"><rect x="4" y="1" width="6" height="10" rx="3" fill="#1d6fc0"/><path d="M1.500 8c0 6 11 6 11 0M7 13v4M4 17h6" fill="none" stroke="#1d6fc0" stroke-width="1.300"/></svg>
    <svg class="ml-[7px] w-[16px] h-[13px] shrink-0" viewBox="0 0 16 13"><rect width="16" height="13" rx="1" fill="#1d6fc0"/><path d="M2 3h12M2 6h12M4 10h8" stroke="#fff" stroke-dasharray="1.500 1"/></svg>
    <svg class="ml-[7px] w-[16px] h-[16px] shrink-0" viewBox="0 0 16 16"><circle cx="6" cy="4" r="3" fill="#a9bdd0"/><path d="M1 14c0-6 9-6 9 0z" fill="#a9bdd0"/><rect x="8" y="8" width="8" height="6" fill="#fff" stroke="#a9bdd0"/></svg>
    <svg class="ml-[3px] w-[16px] h-[15px] shrink-0" viewBox="0 0 16 15"><path d="M5 0L0 3l2 4 2-1v9h8V6l2 1 2-4-5-3c-1 2-5 2-6 0z" fill="#1d6fc0"/></svg>
    <svg class="ml-[5px] w-[16px] h-[16px] shrink-0" viewBox="0 0 16 16"><path d="M15 4l-3 3-3-3 3-3a4.500 4.500 0 0 0-5 6L1 13l2 2 6-6a4.500 4.500 0 0 0 6-5z" fill="#1d6fc0"/></svg>
  </div>
  <div class="absolute left-[703px] top-[4px] w-[27px] h-[23px] bg-[#f0501e] rounded-[5px] text-white font-bold text-[22px] flex items-center justify-center font-['Liberation_Sans',sans-serif]">S</div>
  <div class="absolute left-[969px] top-[-24px] w-[42px] h-[42px] rounded-full bg-[#3db24a] border-2 border-[#c4c4c4] flex items-end justify-center pb-[5px] text-white font-bold text-[11px] font-['Liberation_Sans',sans-serif]">68</div>

  <!-- Query dialog -->
  <div class="absolute left-[293px] top-[121px] w-[852px] h-[510px] bg-[#f0f0f0] border border-[#3a97ee] shadow-[0_0_22px_rgba(0,0,0,0.4)] flex flex-col whitespace-nowrap">
    <!-- Dialog title -->
    <div class="h-[27px] bg-white flex shrink-0">
      <svg class="w-[16px] h-[16px] ml-[7px] mt-[5px] shrink-0"><use href="#app"></use></svg>
      <div class="ml-[4px] mt-[6px] w-[700px]">查询</div>
      <svg class="w-[10px] h-[10px] mt-[9px] ml-[9px] shrink-0" viewBox="0 0 10 10"><path d="M0 5h10" stroke="#bbb"/></svg>
      <svg class="w-[10px] h-[11px] mt-[6px] ml-[36px] shrink-0" viewBox="0 0 10 11"><rect x="0.500" y="0.500" width="9" height="10" fill="none" stroke="#111"/></svg>
      <div class="w-[45px] h-[27px] ml-[19px] bg-[#f39ca5] flex items-center justify-center shrink-0">
        <svg class="w-[10px] h-[10px]" viewBox="0 0 10 10"><path d="M0 0l10 10M10 0L0 10" stroke="#b77" stroke-width="1"/></svg>
      </div>
    </div>
    <!-- Dialog tabs -->
    <div class="h-[28px] bg-[#f5f5f5] flex items-center shrink-0">
      <div class="ml-[7px] mb-[7px] w-[48px] shrink-0">清单指引</div>
      <div class="ml-[11px] mb-[4px] w-[1px] h-[20px] bg-[#c4c4c4] shrink-0"></div>
      <div class="ml-[9px] mb-[7px] w-[24px] shrink-0">清单</div>
      <div class="ml-[24px] mb-[5px] w-[40px] h-[21px] border-2 border-l-[#666] border-t-[#666] border-r-[#ddd] border-b-[#ddd] flex items-center justify-center shrink-0">定额</div>
      <div class="ml-[5px] mb-[4px] w-[1px] h-[20px] bg-[#c4c4c4] shrink-0"></div>
      <div class="ml-[11px] mb-[7px] w-[36px] shrink-0">人材机</div>
      <div class="ml-[11px] mb-[4px] w-[1px] h-[20px] bg-[#c4c4c4] shrink-0"></div>
      <div class="ml-[10px] mb-[7px] w-[60px] shrink-0">补充人材机</div>
      <div class="ml-[404px] w-[70px] h-[23px] bg-[#c8c8c8] border border-[#bbb] text-[#999] flex items-center justify-center shrink-0">插入(I)</div>
      <div class="ml-[7px] w-[67px] h-[23px] bg-[#c8c8c8] border border-[#bbb] text-[#999] flex items-center justify-center shrink-0">替换(R)</div>
    </div>
    <!-- Dialog body -->
    <div class="flex flex-1 min-h-0">
      <!-- Left: chapter tree -->
      <div class="w-[216px] shrink-0 flex flex-col">
        <div class="h-[20px] w-[215px] bg-[#dcdcdc] border border-[#aaa] flex items-center pl-[3px] shrink-0">
          <span class="w-[193px] overflow-hidden">湖北省房屋建筑与装饰工程消耗里定额</span>
          <svg class="w-[10px] h-[6px] ml-[5px]" viewBox="0 0 10 6"><path d="M1 1l4 4 4-4" fill="none" stroke="#666"/></svg>
        </div>
        <div class="h-[20px] mt-[2px] flex items-end shrink-0">
          <div class="w-[63px] h-[20px] bg-[#f7f7f7] flex items-center justify-center">章节查询</div>
          <div class="w-[56px] h-[18px] bg-[#e6e6e6] border border-[#ddd] flex items-center justify-center">条件查询</div>
        </div>
        <div class="flex-1 border border-[#ddd] w-[214px] bg-[#f7f7f7] pt-[3px] pl-[3px] flex flex-col min-h-0">
          <div class="relative w-[208px] h-[368px] border border-[#999] bg-white shrink-0 overflow-hidden flex flex-col">
            <div class="flex flex-1 min-h-0">
              <div id="chapterTree" class="relative w-[189px] pt-[1px] overflow-hidden shrink-0">
                <div class="absolute left-[12px] top-0 bottom-0 border-l border-dotted border-[#666]"></div>
                <div class="absolute left-[31px] top-[195px] bottom-0 border-l border-dotted border-[#666]"></div>
                <div class="absolute left-[50px] top-[211px] bottom-[16px] border-l border-dotted border-[#666]"></div>
              </div>
              <div class="w-[15px] bg-white flex flex-col items-center shrink-0">
                <svg class="w-[10px] h-[10px] mt-[5px] shrink-0" viewBox="0 0 10 10"><path d="M1 7l4-4 4 4" fill="none" stroke="#555" stroke-width="1.500"/></svg>
                <div class="w-[15px] h-[198px] bg-[#cdcdcd] mt-[31px] shrink-0"></div>
                <svg class="w-[10px] h-[10px] mt-[85px] shrink-0" viewBox="0 0 10 10"><path d="M1 3l4 4 4-4" fill="none" stroke="#555" stroke-width="1.500"/></svg>
              </div>
            </div>
            <div class="h-[15px] bg-[#f0f0f0] flex items-center shrink-0">
              <svg class="w-[18px] h-[10px] shrink-0" viewBox="0 0 18 10"><path d="M11 1L7 5l4 4" fill="none" stroke="#555" stroke-width="1.500"/></svg>
              <div class="w-[105px] h-[15px] bg-[#cdcdcd] shrink-0"></div>
              <svg class="w-[18px] h-[10px] ml-[49px] shrink-0" viewBox="0 0 18 10"><path d="M7 1l4 4-4 4" fill="none" stroke="#555" stroke-width="1.500"/></svg>
            </div>
          </div>
          <div class="flex items-center h-[36px] pl-[12px] text-[#222] shrink-0">
            <div class="w-[11px] h-[11px] rounded-full border border-[#aaa] bg-[#f8f8f8]"></div><span class="ml-[4px] w-[48px]">标准</span>
            <div class="w-[11px] h-[11px] rounded-full border border-[#aaa] bg-[#f8f8f8]"></div><span class="ml-[4px] w-[49px]">补充</span>
            <div class="w-[11px] h-[11px] rounded-full border border-[#aaa] bg-[#f8f8f8] flex items-center justify-center"><div class="w-[5px] h-[5px] rounded-full bg-[#222]"></div></div><span class="ml-[4px]">全部</span>
          </div>
        </div>
      </div>
      <!-- Right: quota grid -->
      <div class="ml-[3px] w-[631px] shrink-0 bg-white border border-[#aaa] h-[453px]">
        <div id="quotaGrid"></div>
      </div>
    </div>
  </div>

  <!-- Red annotation boxes -->
  <div class="absolute left-[497px] top-[249px] w-[258px] h-[25px] border-[3px] border-[#f00]"></div>
  <div class="absolute left-[286px] top-[366px] w-[175px] h-[83px] border-[3px] border-[#f00]"></div>

  <script>
    // left tree
    const leftItems = ['土石方工程', '砌筑工程', '混凝土及钢筋混凝土工程', '金属结构工程', '门窗工程', '屋面及防水工程', '墙、柱面装饰与隔断、幕墙工程', '措施项目'];
    let leftHtml = '<div class="h-[13px] pl-[5px] flex items-center whitespace-nowrap">整个项目</div>';
    leftItems.forEach((t, i) => {
      const cls = i === 3 ? 'bg-[#d9d9d9]' : '';
      leftHtml += `<div class="h-[14px] pl-[13px] flex items-center whitespace-nowrap"><span class="w-[7px] border-t border-dotted border-[#777] shrink-0"></span><span class="px-[4px] ${cls}">${t}</span></div>`;
    });
    document.getElementById('leftTree').innerHTML = leftHtml;

    // dialog chapter tree: [text, level, kind]
    const chapters = [
      ['第三章木结构工程', 1, 'r'], ['第四章金属结构工程', 1, 'r'], ['第五章屋面及防水工程', 1, 'r'],
      ['第六章保温、隔热、防腐工程', 1, 'r'], ['第七章混凝土、钢筋混凝土工程', 1, 'r'], ['第八章脚手架工程', 1, 'r'],
      ['第九章垂直运输工程', 1, 'r'], ['第十章常用大型机械安拆和', 1, 'r'], ['第十一章成品构件二次运输', 1, 'r'],
      ['第十二章构筑物工程', 1, 'r'], ['装饰工程', 0, 'd'], ['第一部分工程项目', 1, 'd'], ['第一章楼地面工程', 2, 'd'],
      ['一、垫层', 3, 'sel'], ['二、找平层', 3, 'l'], ['三、整体面层', 3, 'l'], ['四、块料面层', 3, 'r'],
      ['五、塑料、橡胶面层', 3, 'l'], ['六、地毯及附件', 3, 'l'], ['七、木地板', 3, 'r'], ['八、其他面层', 3, 'r'], ['第二章墙、柱面工程', 2, 'r']
    ];
    const indent = ['pl-[6px]', 'pl-[26px]', 'pl-[45px]', 'pl-[64px]'];
    const rightIcon = '<svg class="w-[10px] h-[10px] shrink-0" viewBox="0 0 10 10"><path d="M3 1l4 4-4 4" fill="none" stroke="#aaa" stroke-width="1.800"/></svg>';
    const downIcon = '<svg class="w-[10px] h-[10px] shrink-0" viewBox="0 0 10 10"><path d="M1 3l4 4 4-4" fill="none" stroke="#555" stroke-width="1.800"/></svg>';
    const leafIcon = '<span class="w-[10px] border-t border-dotted border-[#666] shrink-0"></span>';
    let treeHtml = '';
    chapters.forEach(([t, lv, k]) => {
      const icon = k === 'r' ? rightIcon : k === 'd' ? downIcon : leafIcon;
      const label = k === 'sel' ? `<span class="ml-[4px] pl-[3px] pr-[4px] h-[16px] flex items-center bg-[#cce8ff]">${t}</span>` : `<span class="ml-[7px]">${t}</span>`;
      treeHtml += `<div class="relative h-[16px] flex items-center whitespace-nowrap ${indent[lv]}">${icon}${label}</div>`;
    });
    document.getElementById('chapterTree').insertAdjacentHTML('beforeend', treeHtml);

    // quota grid
    const quotas = [
      ['垫层 3:7灰土', '10m3', '1466.82', '1345.35'], ['垫层 三合土或四合土', '10m3', '2009.54', '1851.31'],
      ['垫层 砂', '10m3', '1278.4', '1129.88'], ['砂石垫层 人工级配', '10m3', '2723.31', '2425.42'],
      ['砂石垫层 天然级配', '10m3', '1543.82', '1394.33'], ['毛石垫层 干铺', '10m3', '1744.55', '1584.82'],
      ['毛石垫层 灌浆', '10m3', '2409.27', '2201.64'], ['碎砖垫层 干铺', '10m3', '1078.35', '1003.34'],
      ['碎砖垫层 灌浆', '10m3', '1581.5', '1468.91'], ['砾(碎)石垫层 干铺', '10m3', '1638.3', '1478.46'],
      ['砾(碎)石垫层 灌浆', '10m3', '2216.6', '2006.68'], ['砾(碎)石垫层 灌沥青', '10m3', '6079.01', '5389.49'],
      ['原土夯 砾石', '100m2', '1300.74', '1176.16'], ['炉渣垫层 干铺', '10m3', '885.29', '798.71'],
      ['炉渣垫层 水泥石灰拌合', '10m3', '2490.01', '2268.06'], ['炉渣垫层 石灰拌合', '10m3', '1886.84', '1747.31'],
      ['垫层 现浇混凝土', '10m3', '3390.26', '3031.94'], ['垫层 商品混凝土', '10m3', '3848.24', '3380.54'],
      ['垫层 炉(矿)渣混凝土', '10m3', '2769.53', '2493.38']
    ];
    const cellBase = 'h-full shrink-0 border-r border-b border-[#b9b9b9] flex items-center overflow-hidden';
    const headGray = 'bg-linear-to-b from-[#f6f6f6] to-[#e2e2e2] justify-center';
    const headGold = 'bg-linear-to-b from-[#fbdc9c] to-[#f2bd62] justify-center';
    const mono = "font-['Liberation_Mono',monospace] text-[11px] tracking-[-0.6px]";
    let q = `<div class="flex h-[20px]">
      <div class="w-[23px] ${cellBase} ${headGray}"></div>
      <div class="w-[61px] ${cellBase} ${headGold}">编码</div>
      <div class="w-[268px] ${cellBase} ${headGray}">名称</div>
      <div class="w-[56px] ${cellBase} ${headGray}">单位</div>
      <div class="w-[73px] ${cellBase} ${headGray}">含税单价</div>
      <div class="w-[73px] ${cellBase} ${headGray}">不含税单价</div>
    </div>`;
    quotas.forEach((r, i) => {
      const n = i + 1;
      q += `<div class="flex h-[19px]">
        <div class="w-[23px] ${cellBase} justify-center ${mono} ${n === 1 ? 'bg-[#fcd58c]' : 'bg-[#f0f0f0]'}">${n}</div>
        <div class="w-[61px] ${cellBase} pl-[2px] ${mono} ${n === 1 ? 'bg-[#d6e8f7]' : ''}">A13-${n}</div>
        <div class="w-[268px] ${cellBase} pl-[2px] whitespace-pre [word-spacing:3px]">${r[0]}</div>
        <div class="w-[56px] ${cellBase} pl-[2px] ${mono}">${r[1]}</div>
        <div class="w-[73px] ${cellBase} justify-end pr-[12px] ${mono}">${r[2]}</div>
        <div class="w-[73px] ${cellBase} justify-end pr-[3px] ${mono}">${r[3]}</div>
      </div>`;
    });
    document.getElementById('quotaGrid').innerHTML = q;

    // upper grid
    const upW = ['w-[33px]', 'w-[123px]', 'w-[34px]', 'w-[246px]', 'w-[67px]', 'w-[43px]', 'w-[81px]', 'w-[41px]', 'w-[57px]', 'w-[75px]', 'w-[75px]', 'w-[81px]', 'w-[81px]', 'w-[120px]'];
    const upHead = ['', '编码', '类别', '名称', '项目特征', '单位', '工程量表达式', '含量', '工程量', '单价', '合价', '综合单价', '综合合价', '单价构成文件'];
    let up = '<div class="flex h-[20px]">' + upHead.map((t, i) => `<div class="${upW[i]} ${cellBase} ${i === 1 ? headGold : headGray}">${t}</div>`).join('') + '</div>';
    const minusBox = '<span class="absolute top-1/2 -translate-y-1/2 w-[12px] h-[12px] bg-white border border-[#bbb] flex items-center justify-center"><span class="w-[6px] h-[1px] bg-black"></span></span>';
    const subLines = '<span class="absolute left-[9px] top-0 bottom-0 border-l border-[#bbb]"></span><span class="absolute left-[19px] top-0 bottom-0 border-l border-[#bbb]"></span><span class="absolute left-[19px] w-[17px] border-t border-[#bbb]"></span>';
    const upRows = [
      { h: 'h-[19px]', bg: 'bg-[#cbe6fb]', head: 'B1', headBg: 'bg-[#fcd58c]', code: `<span class="absolute left-[4px] top-0 bottom-0 w-[12px]">${minusBox}</span><span class="absolute left-[21px] ${mono}">A.6</span>`, total: '307388.51', file: '[房屋建筑工程]' },
      { h: 'h-[173px]', bg: 'bg-[#a7d9fa]', head: '1', headBg: 'bg-[#f0f0f0]', code: `<span class="absolute left-[9px] top-0 bottom-0 border-l border-[#bbb]"></span><span class="absolute left-[14px] top-0 bottom-0 w-[12px]">${minusBox}</span><span class="absolute left-[31px] ${mono}">010603001</span>`, total: '104843.75', file: '房屋建筑工程' },
      { h: 'h-[29px]', bg: 'bg-white', head: '', headBg: 'bg-[#f0f0f0]', code: `${subLines}<span class="absolute left-[41px] ${mono}">A4-4</span>`, total: '13108.47', file: '房屋建筑工程' },
      { h: 'h-[29px]', bg: 'bg-white', head: '', headBg: 'bg-[#f0f0f0]', code: `${subLines}<span class="absolute left-[41px] ${mono}">C12-1</span>`, total: '662.66', file: '通用安装工程' },
      { h: 'h-[29px]', bg: 'bg-white', head: '', headBg: 'bg-[#f0f0f0]', code: `${subLines}<span class="absolute left-[41px] ${mono}">C12-6</span>`, total: '89326.33', file: '通用安装工程' },
      { h: 'h-[29px]', bg: 'bg-white', head: '', headBg: 'bg-[#f0f0f0]', code: '', total: '', file: '' }
    ];
    upRows.forEach(r => {
      up += `<div class="flex ${r.h}">` + upW.map((w, i) => {
        if (i === 0) return `<div class="${w} ${cellBase} justify-center ${mono} ${r.headBg}">${r.head}</div>`;
        if (i === 1) return `<div class="${w} ${cellBase} relative ${r.bg}">${r.code}</div>`;
        if (i === 12) return `<div class="${w} ${cellBase} justify-end pr-[3px] ${mono} ${r.bg}">${r.total}</div>`;
        if (i === 13) return `<div class="${w} ${cellBase} justify-end pr-[3px] ${r.bg}">${r.file}</div>`;
        return `<div class="${w} ${cellBase} ${r.bg}"></div>`;
      }).join('') + '</div>';
    });
    document.getElementById('upperGrid').innerHTML = up;

    // lower grid
    const lowW = ['w-[20px]', 'w-[88px]', 'w-[35px]', 'w-[127px]', 'w-[80px]', 'w-[41px]', 'w-[60px]', 'w-[82px]', 'w-[81px]', 'w-[81px]', 'w-[82px]', 'w-[81px]', 'w-[68px]'];
    const lowRows = [
      ['1000000100'], ['1000000100'], ['1000000100'], ['1000000100'], ['1000000100'], ['4001112000'], ['4005016100'],
      ['4021010510', '材', '镀锌铁丝', '', 'kg'],
      ['4021010510', '材', '镀锌铁丝', '', 'kg', '1.3897', '5.7', '5.004', '4.393', '5.004', '87.79'],
      ['4021010510', '材', '镀锌铁丝8#', '', 'kg', '0.0642', '5.7', '5.004', '5.004', '5.7', '87.79'],
      ['4021031900', '材', '射钉', '', '百个', '0', '32.67', '28.204', '28.681', '32.67', '87.79'],
      ['4027010100', '材', '电焊条', '', 'kg', '32.8809', '6.5', '5.706', '5.009', '5.706', '87.79']
    ];
    let low = '<div class="flex h-[21px]">' + lowW.map((w, i) => `<div class="${w} ${cellBase} ${i === 1 ? headGold : headGray}">${i === 1 ? '编码' : ''}</div>`).join('') + '</div>';
    lowRows.forEach((r, idx) => {
      low += '<div class="flex h-[19px]">' + lowW.map((w, i) => {
        if (i === 0) return `<div class="${w} ${cellBase} justify-center ${mono} ${idx === 0 ? 'bg-[#fcd58c]' : 'bg-[#f0f0f0]'}">${idx + 1}</div>`;
        const v = r[i - 1] || '';
        if (i === 1) return `<div class="${w} ${cellBase} justify-end pr-[7px] ${mono} ${idx === 0 ? 'bg-[#d9e8c4]' : 'bg-[#ffffc0]'}">${v}</div>`;
        if (i === 2) return `<div class="${w} ${cellBase} justify-center bg-[#ffffc0]">${v}</div>`;
        if (i === 3) return `<div class="${w} ${cellBase} pl-[2px] bg-[#ffffc0]">${v}</div>`;
        if (i === 5) return `<div class="${w} ${cellBase} pl-[2px] bg-[#ffffc0]">${v}</div>`;
        if (i === 12) return `<div class="${w} ${cellBase} justify-center bg-[#ffffc0]"><span class="w-[13px] h-[15px] border border-[#444] bg-white"></span></div>`;
        return `<div class="${w} ${cellBase} justify-end pr-[3px] ${mono} bg-[#ffffc0]">${v}</div>`;
      }).join('') + '</div>';
    });
    document.getElementById('lowerGrid').innerHTML = low;
  </script>
</body>
</html>
